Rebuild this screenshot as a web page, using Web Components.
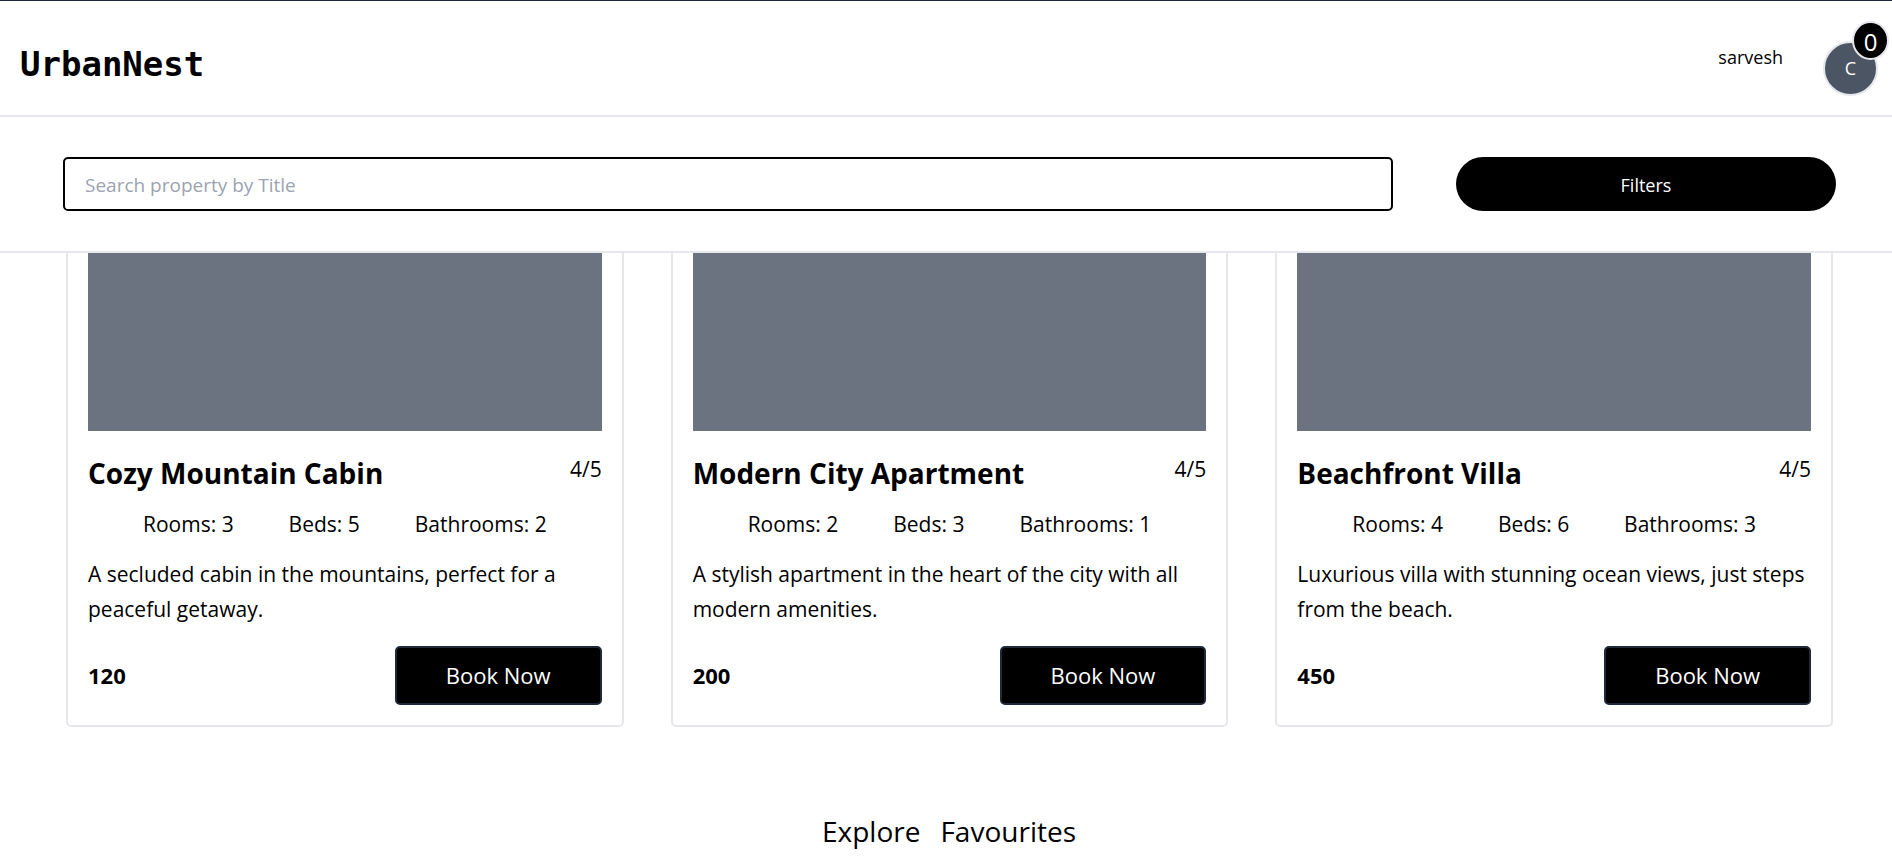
<!DOCTYPE html>
<html lang="en">
<head>
<meta charset="utf-8">
<meta name="viewport" content="width=device-width, initial-scale=1">
<title>UrbanNest</title>
<style>
  body {
    margin: 0;
    background: #fff;
    color: #000;
    font-family: "Segoe UI", "Open Sans", "Noto Sans", sans-serif;
    font-size: 18px;
    line-height: 28px;
    --line: #e5e7eb;
  }
</style>
</head>
<body>
<urban-app></urban-app>

<script>
const define = (name, html) => {
  const template = document.createElement('template');
  template.innerHTML = '<style>*{box-sizing:border-box}</style>' + html;
  customElements.define(name, class extends HTMLElement {
    constructor() {
      super();
      this.attachShadow({ mode: 'open' }).append(template.content.cloneNode(true));
    }
  });
};

define('user-avatar', `
  <style>
    :host { display: block; position: relative; }
    button {
      display: block; width: 55px; height: 55px; padding: 0;
      border: 2px solid var(--line); border-radius: 50%;
      background: #4b5563; color: #fff; font: inherit; text-align: center;
    }
    .count {
      position: absolute; top: -20px; right: -11px;
      width: 37px; height: 39px; border: 2px solid var(--line); border-radius: 50%;
      background: #000; color: #fff;
      font-size: 24px; line-height: 37px; text-align: center;
    }
  </style>
  <button type="button" aria-label="Account"><slot></slot></button>
  <span class="count"><slot name="count"></slot></span>
`);

define('site-header', `
  <style>
    :host { display: block; border-top: 1px solid #1f2937; border-bottom: 2px solid var(--line); }
    header { display: flex; align-items: center; height: 114px; padding: 0 14px 0 20px; }
    h1 {
      margin: 12px auto 0 0;
      font: bold 34px/40px Consolas, "DejaVu Sans Mono", monospace;
    }
    .user { margin: 0 40px 2px 0; }
    user-avatar { margin-top: 20px; }
  </style>
  <header>
    <h1>UrbanNest</h1>
    <span class="user"><slot></slot></span>
    <user-avatar>C<span slot="count">0</span></user-avatar>
  </header>
`);

define('search-bar', `
  <style>
    :host { display: block; border-bottom: 2px solid var(--line); }
    form { display: flex; gap: 63px; padding: 40px 56px 40px 63px; }
    input, button { height: 54px; font: inherit; }
    input {
      flex: 1; min-width: 0; padding: 2px 20px 0; font-size: 19px;
      border: 2px solid #000; border-radius: 5px; background: #fff; color: #000;
    }
    input::placeholder { color: #9ca3af; opacity: 1; }
    button {
      flex: 0 0 380px; padding: 2px 0 0; border: 0; border-radius: 27px;
      background: #000; color: #fff;
    }
  </style>
  <form>
    <input type="text" aria-label="Search property by Title" placeholder="Search property by Title">
    <button type="button">Filters</button>
  </form>
`);

define('property-card', `
  <style>
    :host {
      display: block; padding: 20px; border: 2px solid var(--line); border-radius: 5px;
      font-size: 21px; line-height: 35px;
    }
    .photo { height: 300px; background: #6b7280; }
    .top { display: flex; justify-content: space-between; margin-top: 21px; }
    h2 { margin: 0; font-size: 28px; line-height: 42px; font-weight: bold; }
    .facts { display: flex; justify-content: space-evenly; margin-top: 13px; }
    p { margin: 15px 0 0; }
    .bottom {
      display: flex; justify-content: space-between; align-items: center;
      margin-top: 19px; font-size: 22px;
    }
    button {
      height: 59px; padding: 0 49px;
      border: 2px solid #1f2937; border-radius: 5px;
      background: #000; color: #fff; font: inherit;
    }
  </style>
  <div class="photo"></div>
  <div class="top"><h2><slot name="title"></slot></h2><slot name="rating"></slot></div>
  <div class="facts">
    <span>Rooms: <slot name="rooms"></slot></span>
    <span>Beds: <slot name="beds"></slot></span>
    <span>Bathrooms: <slot name="baths"></slot></span>
  </div>
  <p><slot></slot></p>
  <div class="bottom">
    <strong><slot name="price"></slot></strong>
    <button type="button">Book Now</button>
  </div>
`);

define('site-nav', `
  <style>
    :host { display: block; }
    nav { display: flex; justify-content: center; gap: 20px; padding: 0 0 10px 6px; }
    a { color: inherit; text-decoration: none; font-size: 28px; line-height: 40px; }
  </style>
  <nav><a href="#explore">Explore</a><a href="#favourites">Favourites</a></nav>
`);

define('urban-app', `
  <style>
    :host { display: block; }
    .sticky { position: sticky; top: 0; z-index: 1; background: #fff; }
    main {
      display: grid; grid-template-columns: repeat(3, minmax(0, 1fr)); gap: 47px;
      margin-top: -144px; padding: 0 59px 84px 66px;
    }
  </style>
  <div class="sticky">
    <site-header>sarvesh</site-header>
    <search-bar></search-bar>
  </div>
  <main>
    <property-card>
      <span slot="title">Cozy Mountain Cabin</span><span slot="rating">4/5</span>
      <span slot="rooms">3</span><span slot="beds">5</span><span slot="baths">2</span>
      A secluded cabin in the mountains, perfect for a peaceful getaway.
      <span slot="price">120</span>
    </property-card>
    <property-card>
      <span slot="title">Modern City Apartment</span><span slot="rating">4/5</span>
      <span slot="rooms">2</span><span slot="beds">3</span><span slot="baths">1</span>
      A stylish apartment in the heart of the city with all modern amenities.
      <span slot="price">200</span>
    </property-card>
    <property-card>
      <span slot="title">Beachfront Villa</span><span slot="rating">4/5</span>
      <span slot="rooms">4</span><span slot="beds">6</span><span slot="baths">3</span>
      Luxurious villa with stunning ocean views, just steps from the beach.
      <span slot="price">450</span>
    </property-card>
  </main>
  <site-nav></site-nav>
`);
</script>
</body>
</html>
